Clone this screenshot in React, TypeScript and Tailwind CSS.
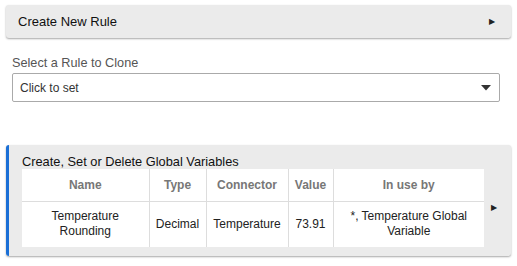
export default function App() {
  const font = { fontFamily: '"Liberation Sans", Arial, sans-serif' };
  return (
    <div className="w-[517px] h-[266px] bg-white pt-[5px] px-[6px] text-[#222]" style={font}>
      <div className="flex h-[33px] items-center justify-between rounded-[3px] bg-[#ebebeb] pl-[12px] pr-[16px] shadow-[0_1px_2px_rgba(0,0,0,0.35)]">
        <span className="text-[13px] text-[#111]">Create New Rule</span>
        <span className="text-[8px] text-[#222]">&#9654;</span>
      </div>

      <div className="mt-[18px] pl-[6px] pr-[11px]">
        <div className="text-[12.7px] leading-[15px] text-[#555]">Select a Rule to Clone</div>
        <div className="mt-[2px] flex h-[29px] items-center justify-between rounded-[2px] border border-[#aaa] pl-[7px] pr-[8px]">
          <span className="text-[12px] text-[#333]">Click to set</span>
          <svg width="10" height="6" viewBox="0 0 10 6">
            <path d="M0 0 L10 0 L5 5.5 Z" fill="#333" />
          </svg>
        </div>
      </div>

      <div className="mt-[43px] flex h-[111px] rounded-[3px] bg-[#ebebeb] shadow-[0_1px_2px_rgba(0,0,0,0.35)]">
        <div className="w-[3px] rounded-l-[3px] bg-[#1a6fd6]" />
        <div className="flex flex-1 flex-col pl-[13px] pt-[9px]">
          <div className="text-[12.8px] leading-[15px] text-[#111]">Create, Set or Delete Global Variables</div>
          <div className="flex items-center">
            <table className="w-[462px] border-collapse bg-white text-center text-[12px]">
              <thead>
                <tr className="h-[32px] text-[#777]">
                  <th className="w-[127px] border-r border-b border-[#ddd] font-bold">Name</th>
                  <th className="w-[57px] border-r border-b border-[#ddd] font-bold">Type</th>
                  <th className="w-[82px] border-r border-b border-[#ddd] font-bold">Connector</th>
                  <th className="w-[45px] border-r border-b border-[#ddd] font-bold">Value</th>
                  <th className="border-b border-[#ddd] font-bold">In use by</th>
                </tr>
              </thead>
              <tbody>
                <tr className="h-[46px] text-[#222] leading-[15px]">
                  <td className="border-r border-[#ddd]">Temperature<br />Rounding</td>
                  <td className="border-r border-[#ddd]">Decimal</td>
                  <td className="border-r border-[#ddd]">Temperature</td>
                  <td className="border-r border-[#ddd]">73.91</td>
                  <td>*, Temperature Global<br />Variable</td>
                </tr>
              </tbody>
            </table>
            <span className="ml-[7px] text-[8px] text-[#222]">&#9654;</span>
          </div>
        </div>
      </div>
    </div>
  );
}
